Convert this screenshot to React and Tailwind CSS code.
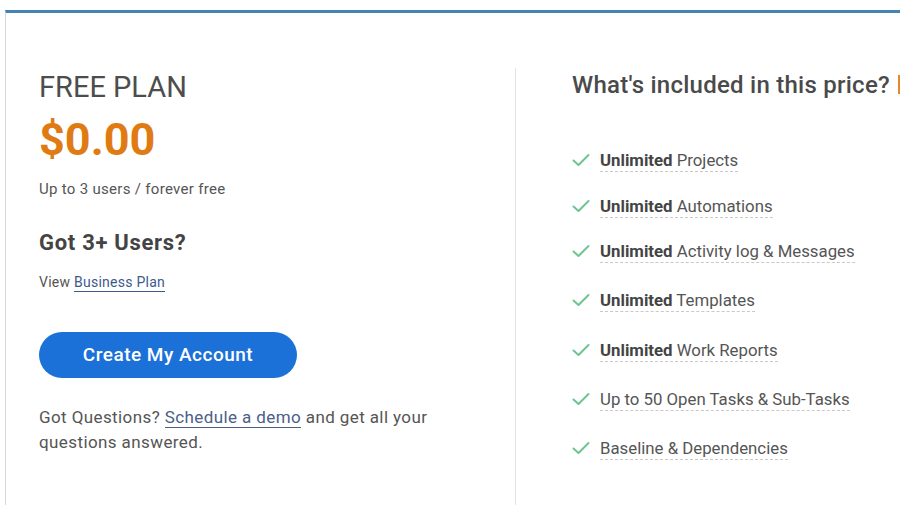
import React from "react";

const features = [
  { bold: "Unlimited", rest: " Projects", space: "" },
  { bold: "Unlimited", rest: " Automations", space: "mt-[24px]" },
  { bold: "Unlimited", rest: " Activity log & Messages", space: "mt-[23px]" },
  { bold: "Unlimited", rest: " Templates", space: "mt-[27px]" },
  { bold: "Unlimited", rest: " Work Reports", space: "mt-[28px]" },
  { bold: "", rest: "Up to 50 Open Tasks & Sub-Tasks", space: "mt-[27px]" },
  { bold: "", rest: "Baseline & Dependencies", space: "mt-[27px]" },
];

function Check() {
  return (
    <svg width="18" height="14" viewBox="0 0 18 14" className="mt-[3px] shrink-0">
      <polyline points="1.5,7.5 6.5,12 16.5,2" fill="none" stroke="#6cc58f" strokeWidth="2" strokeLinecap="round" strokeLinejoin="round" />
    </svg>
  );
}

export default function App() {
  return (
    <div className="w-[900px] h-[505px] bg-white pt-[10px] pl-[5px] overflow-hidden" style={{ fontFamily: "Roboto, 'Liberation Sans', sans-serif" }}>
      <div className="h-[520px] flex border-t-[3px] border-t-[#4682b4] border-l border-l-[#d6d6d6]">
        {/* Left: plan */}
        <div className="w-[509px] shrink-0 pl-[33px] pt-[60px]">
          <h1 className="text-[29px] leading-none text-[#4d4d4d] font-normal">FREE PLAN</h1>
          <div className="mt-[15px] text-[45px] leading-none font-bold text-[#e07b14]">$0.00</div>
          <p className="mt-[20px] text-[15px] leading-none tracking-[0.3px] text-[#555]">Up to 3 users / forever free</p>
          <h2 className="mt-[35px] text-[22px] leading-none font-bold tracking-[0.7px] text-[#444]">Got 3+ Users?</h2>
          <p className="mt-[21px] text-[14px] leading-none tracking-[0.25px] text-[#555]">
            View{" "}
            <a href="#" className="text-[#3d5a8c] border-b border-[#3d5a8c] pb-[1px]">Business Plan</a>
          </p>
          <button className="mt-[43px] w-[258px] h-[46px] rounded-full bg-[#1b71d8] text-white text-[19px] tracking-[0.5px] font-medium">
            Create My Account
          </button>
          <p className="mt-[27px] w-[440px] text-[17px] leading-[25px] tracking-[0.4px] text-[#555]">
            Got Questions?{" "}
            <a href="#" className="text-[#4a6088] border-b border-[#4a6088]">Schedule a demo</a>{" "}
            and get all your questions answered.
          </p>
        </div>

        {/* Right: features */}
        <div className="flex-1 mt-[55px] border-l border-l-[#e2e2e2] pl-[56px] pt-[5px] whitespace-nowrap overflow-hidden">
          <h2 className="text-[24px] leading-none font-medium tracking-[0.25px] text-[#4a4a4a]">
            What's included in this price?
            <span className="inline-block align-top ml-[8px] w-[30px] h-[19px] mt-[2px] bg-[#e8862b]"></span>
          </h2>
          <ul className="mt-[53px] flex flex-col">
            {features.map((f, i) => (
              <li key={i} className={`flex items-start gap-[10px] ${f.space}`}>
                <Check />
                <span className="text-[16.8px] leading-[20px] text-[#555] pb-[1px] border-b border-dashed border-[#c9c9c9]">
                  {f.bold && <span className="font-bold text-[#444]">{f.bold}</span>}
                  {f.rest}
                </span>
              </li>
            ))}
          </ul>
        </div>
      </div>
    </div>
  );
}
